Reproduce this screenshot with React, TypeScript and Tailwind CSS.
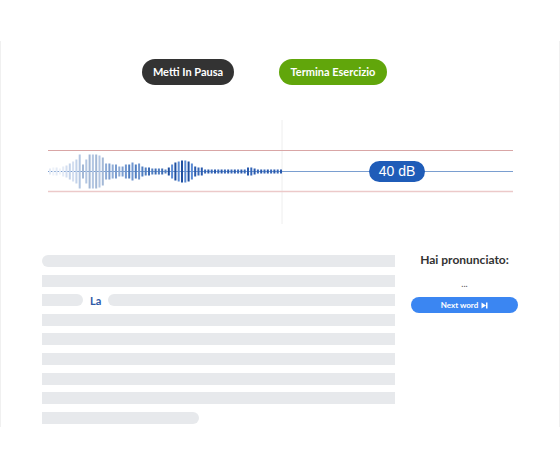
import React from "react";

const amps = [
  3, 4, 4, 3, 5, 6, 8, 10, 12, 17, 7, 12, 17, 17, 17, 16, 14, 8, 8, 7,
  7, 5, 5, 7, 7, 9, 7, 8, 5, 4, 4, 3, 3, 3, 3, 2, 4, 7, 9, 10,
  11, 11, 10, 8, 5, 4, 4, 2, 2, 2, 2, 2, 2, 2, 2, 2, 2, 2, 2, 2,
  4, 4, 3, 2, 2, 2, 2, 2, 2, 2, 2,
];

function barColor(i: number, x: number) {
  const odd = i % 2 === 1;
  if (x < 62) return odd ? "#eef2f9" : "#e3eaf5";
  if (x < 76) return odd ? "#d3def0" : "#c3d3ea";
  if (x < 104) return odd ? "#b3c6e2" : "#a3b8d6";
  if (x < 122) return odd ? "#8eabd6" : "#7c9dcf";
  if (x < 142) return odd ? "#6f95cf" : "#4f7dc0";
  if (x < 166) return odd ? "#4f7dc0" : "#3e6db5";
  if (x < 192) return odd ? "#5a8ad3" : "#1f4f9f";
  return odd ? "#3667b8" : "#2a5aad";
}

function Waveform() {
  const cy = 51.5;
  return (
    <div className="relative h-[104px] w-full">
      <svg width="558" height="104" className="absolute left-0 top-0">
        <line x1="281" y1="0" x2="281" y2="104" stroke="#eeeeee" strokeWidth="1" />
        <line x1="47" y1="30.5" x2="512" y2="30.5" stroke="#d9a6a6" strokeWidth="1" />
        <line x1="47" y1="71.5" x2="512" y2="71.5" stroke="#ecc9c9" strokeWidth="1.6" />
        <line x1="47" y1={cy} x2="512" y2={cy} stroke="#7a9ed0" strokeWidth="1" />
        {amps.map((a, i) => {
          const x = 48 + i * 3.3;
          return (
            <rect
              key={i}
              x={x}
              y={cy - a}
              width="2"
              height={a * 2}
              fill={barColor(i, x)}
            />
          );
        })}
      </svg>
      <div className="absolute left-[368px] top-[41px] flex h-[21px] w-[56px] items-center justify-center rounded-full bg-[#1f5cb8] font-['Liberation_Sans',sans-serif] text-[14px] text-white">
        40 dB
      </div>
    </div>
  );
}

function Line({ className }: { className: string }) {
  return <div className={`h-[12px] bg-[#e7e9ec] ${className}`} />;
}

export default function App() {
  return (
    <div className="h-[469px] w-[560px] overflow-hidden bg-white font-['Lato',sans-serif]">
      <div className="mt-[41px] h-[386px] border-x border-[#f0f0f0]">
        {/* Controls */}
        <div className="flex gap-[45px] pl-[141px] pt-[18px]">
          <button className="flex h-[26px] w-[92px] items-center justify-center rounded-full bg-[#333333] text-[11px] font-bold text-white">
            Metti In Pausa
          </button>
          <button className="flex h-[26px] w-[108px] items-center justify-center rounded-full bg-[#61a60b] text-[11px] font-bold text-white">
            Termina Esercizio
          </button>
        </div>

        <div className="mt-[35px]">
          <Waveform />
        </div>

        {/* Text + recognition */}
        <div className="mt-[28px] flex pl-[41px]">
          <div className="flex w-[353px] flex-col gap-[7.6px] pt-[3px]">
            <Line className="rounded-l-full" />
            <Line className="" />
            <div className="flex h-[12px] items-center">
              <div className="h-[12px] w-[41px] rounded-r-full bg-[#e7e9ec]" />
              <span className="mx-[7px] text-[11px] font-bold leading-none text-[#2f5aa6]">La</span>
              <div className="h-[12px] flex-1 rounded-l-full bg-[#e7e9ec]" />
            </div>
            <Line className="" />
            <Line className="" />
            <Line className="" />
            <Line className="" />
            <Line className="" />
            <Line className="w-[157px] rounded-r-full" />
          </div>

          <div className="ml-[16px] flex w-[107px] flex-col items-center">
            <div className="text-[12px] font-bold leading-[16px] text-[#333333]">Hai pronunciato:</div>
            <div className="mt-[10px] text-[9px] leading-[12px] text-[#555555]">...</div>
            <button className="mt-[7px] flex h-[16px] w-[107px] items-center justify-center gap-[3px] rounded-full bg-[#3b86f2] text-[8px] font-bold text-white">
              Next word
              <svg width="7" height="7" viewBox="0 0 7 7">
                <path d="M0.5 0.5 L5 3.5 L0.5 6.5 Z" fill="white" />
                <rect x="5" y="0.5" width="1.5" height="6" fill="white" />
              </svg>
            </button>
          </div>
        </div>
      </div>
    </div>
  );
}
